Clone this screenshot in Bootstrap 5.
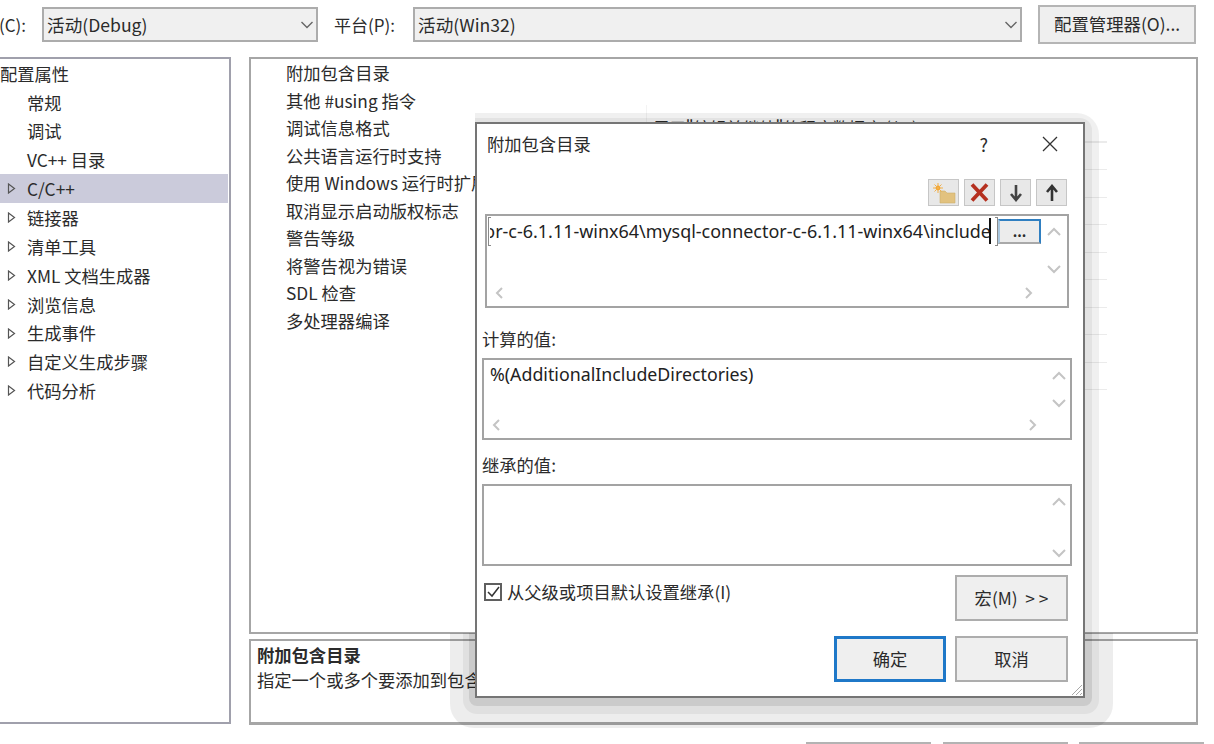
<!DOCTYPE html>
<html lang="zh">
<head>
<meta charset="utf-8">
<link href="https://cdn.jsdelivr.net/npm/bootstrap@5.3.0/dist/css/bootstrap.min.css" rel="stylesheet">
<style>
html,body{height:744px;overflow:hidden;background:#fff;}
body{font-family:"Noto Sans CJK SC","Noto Sans",sans-serif;font-size:17.3px;color:#2b2b2b;line-height:1;position:relative;}
.stage{width:1214px;height:744px;padding:7px 18px 0 0;}
.topbar{height:35px;margin-left:-1px;}
.lbl{font-size:17px;white-space:nowrap;}
.sel{height:35px;background:#f0f0f0;border:2px solid #acacac;display:flex;align-items:center;justify-content:space-between;padding:0 2px 0 3px;font-size:17.6px;flex:none;}
.sel-a{width:276px;margin-left:16px;margin-right:16px;}
.sel-b{width:609px;margin-left:18px;margin-right:16px;}
.mgr{width:158px;height:39px;margin-top:-1px;background:#efefef;border:2px solid #b5b5b5;font-size:17.4px;text-align:center;line-height:33px;flex:none;white-space:nowrap;}
.panes{margin-top:15px;height:667px;}
.tree{width:232px;margin-left:-1px;margin-right:18px;border:2px solid #a0a0ac;border-left:0;flex:none;}
.tree-row{height:28.85px;display:flex;align-items:center;padding-left:28px;position:relative;margin-right:1px;white-space:nowrap;}
.tree-row.root{padding-left:1px;}
.tree-row.on{background:#cbcbdb;}
.tree-row svg{position:absolute;left:8px;top:9px;}
.rcol{width:949px;flex:none;}
.grid-pane{height:577px;border:2px solid #a6a6a6;padding:0 0 0 35px;position:relative;overflow:hidden;}
.prop{height:27.5px;display:flex;align-items:center;white-space:nowrap;position:relative;}
.ghost{position:absolute;left:367px;top:0;line-height:27.5px;font-size:16.4px;}
.rules{position:absolute;left:833px;top:55.5px;width:23px;height:275px;background:repeating-linear-gradient(to bottom,transparent 0,transparent 26.5px,#ebebeb 26.5px,#ebebeb 27.5px);}
.vrule{position:absolute;left:395px;top:46px;width:1px;height:20px;background:#f3f3f3;}
.desc{height:86px;margin-top:5px;border:2px solid #a6a6a6;border-bottom-width:3px;padding:4px 6px;overflow:hidden;}
.desc b{display:block;font-weight:700;margin-bottom:5px;line-height:20px;}
.desc span{line-height:20px;white-space:nowrap;}
.foot{position:absolute;top:742px;width:125px;height:4px;border:2px solid #b3b3b3;background:#eee;}
.sh{position:absolute;}
.sh-a{left:475px;top:113px;width:624px;height:520px;background:rgba(0,0,0,.06);border-radius:0 22px 0 0;}
.sh-b{left:475px;top:118px;width:617px;height:515px;background:rgba(0,0,0,.05);border-radius:0 12px 0 0;}
.sh-c{left:450px;top:633px;width:663px;height:95px;background:rgba(0,0,0,.07);border-radius:0 0 24px 24px;}
.sh-d{left:463px;top:633px;width:636px;height:81px;background:rgba(0,0,0,.05);border-radius:0 0 14px 14px;}
.sh-e{left:469px;top:633px;width:623px;height:73px;background:rgba(0,0,0,.09);border-radius:0 0 8px 8px;}
.dlg{position:absolute;left:475px;top:122px;width:610px;height:576px;background:#fff;border:2px solid #757575;display:flex;flex-direction:column;padding:0 16px 0 5px;}
.dlg-head{height:40px;padding-left:5px;flex:none;}
.dlg-tools{height:27px;margin-top:15px;gap:5px;flex:none;}
.tbtn{width:31px;height:27px;background:#e8e8e8;border:1px solid #c6c6c6;display:flex;align-items:center;justify-content:center;}
.box{border:2px solid #a3a3a3;position:relative;margin-right:-5px;flex:none;}
.box1{height:94px;margin-top:8px;margin-left:3px;margin-right:-2px;}
.box2,.box3{height:82px;margin-top:8px;}
.caption{height:20px;flex:none;line-height:18px;}
.scr{position:absolute;}
.editline{position:absolute;left:3px;top:3px;height:26px;width:501px;overflow:hidden;font-family:"Noto Sans","Open Sans",sans-serif;font-size:17.95px;line-height:25px;white-space:nowrap;display:flex;justify-content:flex-end;color:#222;}
.caret{position:absolute;left:502px;top:2px;width:2px;height:26px;background:#111;}
.brk{position:absolute;top:1px;height:29px;width:3px;border:1px solid #8a8a8a;}
.brk-l{left:1px;border-right:0;}
.brk-r{left:508px;border-left:0;}
.browse{position:absolute;left:511px;top:3px;width:43px;height:25px;background:#ececec;border:2px solid #2f7fc1;border-bottom-color:#a9a9a9;border-left-color:#a9c7df;text-align:center;font-size:14px;line-height:20px;font-weight:700;}
.val{padding:4px 6px;font-family:"Noto Sans","Open Sans",sans-serif;font-size:17.8px;line-height:20px;color:#222;}
.btnx{width:113px;height:46px;background:#efefef;border:2px solid #adadad;display:flex;align-items:center;justify-content:center;color:#2b2b2b;white-space:nowrap;}
.btn-main{width:112px;border:3px solid #1f78c8;}
.chk{width:18px;height:18px;border:2px solid #5f5f5f;flex:none;display:flex;align-items:center;justify-content:center;}
.grip{position:absolute;right:0;bottom:0;}
</style>
</head>
<body>
<div class="stage">
  <div class="topbar d-flex align-items-center">
    <span class="lbl">(C):</span>
    <div class="sel sel-a"><span>活动(Debug)</span><svg width="14" height="8" viewBox="0 0 14 8"><path d="M1.500 1l5.500 5.500L12.500 1" fill="none" stroke="#666" stroke-width="1.400"/></svg></div>
    <span class="lbl">平台(P):</span>
    <div class="sel sel-b"><span>活动(Win32)</span><svg width="14" height="8" viewBox="0 0 14 8"><path d="M1.500 1l5.500 5.500L12.500 1" fill="none" stroke="#666" stroke-width="1.400"/></svg></div>
    <div class="mgr">配置管理器(O)...</div>
  </div>
  <div class="panes d-flex">
    <div class="tree">
      <div class="tree-row root">配置属性</div>
      <div class="tree-row">常规</div>
      <div class="tree-row">调试</div>
      <div class="tree-row">VC++ 目录</div>
      <div class="tree-row on"><svg width="9" height="11" viewBox="0 0 9 11"><path d="M1.500 1l6 4.500-6 4.500z" fill="none" stroke="#555" stroke-width="1.200"/></svg>C/C++</div>
      <div class="tree-row"><svg width="9" height="11" viewBox="0 0 9 11"><path d="M1.500 1l6 4.500-6 4.500z" fill="none" stroke="#555" stroke-width="1.200"/></svg>链接器</div>
      <div class="tree-row"><svg width="9" height="11" viewBox="0 0 9 11"><path d="M1.500 1l6 4.500-6 4.500z" fill="none" stroke="#555" stroke-width="1.200"/></svg>清单工具</div>
      <div class="tree-row"><svg width="9" height="11" viewBox="0 0 9 11"><path d="M1.500 1l6 4.500-6 4.500z" fill="none" stroke="#555" stroke-width="1.200"/></svg>XML 文档生成器</div>
      <div class="tree-row"><svg width="9" height="11" viewBox="0 0 9 11"><path d="M1.500 1l6 4.500-6 4.500z" fill="none" stroke="#555" stroke-width="1.200"/></svg>浏览信息</div>
      <div class="tree-row"><svg width="9" height="11" viewBox="0 0 9 11"><path d="M1.500 1l6 4.500-6 4.500z" fill="none" stroke="#555" stroke-width="1.200"/></svg>生成事件</div>
      <div class="tree-row"><svg width="9" height="11" viewBox="0 0 9 11"><path d="M1.500 1l6 4.500-6 4.500z" fill="none" stroke="#555" stroke-width="1.200"/></svg>自定义生成步骤</div>
      <div class="tree-row"><svg width="9" height="11" viewBox="0 0 9 11"><path d="M1.500 1l6 4.500-6 4.500z" fill="none" stroke="#555" stroke-width="1.200"/></svg>代码分析</div>
    </div>
    <div class="rcol">
      <div class="grid-pane">
        <div class="rules"></div>
        <div class="vrule"></div>
        <div class="prop">附加包含目录</div>
        <div class="prop">其他 #using 指令</div>
        <div class="prop">调试信息格式<span class="ghost">用于"编辑并继续"的程序数据库 (/ZI)</span></div>
        <div class="prop">公共语言运行时支持</div>
        <div class="prop">使用 Windows 运行时扩展</div>
        <div class="prop">取消显示启动版权标志</div>
        <div class="prop">警告等级</div>
        <div class="prop">将警告视为错误</div>
        <div class="prop">SDL 检查</div>
        <div class="prop">多处理器编译</div>
      </div>
      <div class="desc"><b>附加包含目录</b><span>指定一个或多个要添加到包含路径中的目录</span></div>
    </div>
  </div>
</div>
<div class="foot" style="left:806px"></div>
<div class="foot" style="left:943px"></div>
<div class="foot" style="left:1079px"></div>
<div class="sh sh-a"></div>
<div class="sh sh-b"></div>
<div class="sh sh-c"></div>
<div class="sh sh-d"></div>
<div class="sh sh-e"></div>
<div class="dlg">
  <div class="dlg-head d-flex align-items-center justify-content-between">
    <span>附加包含目录</span>
    <span class="d-flex align-items-center"><span style="font-size:18px;margin-right:54px">?</span><svg width="16" height="16" viewBox="0 0 16 16" style="margin-right:9px"><path d="M1 1l14 14M15 1L1 15" stroke="#333" stroke-width="1.300"/></svg></span>
  </div>
  <div class="dlg-tools d-flex justify-content-end">
    <div class="tbtn"><svg width="24" height="22" viewBox="0 0 24 22"><path d="M8 9h5l2 2h8v10H8z" fill="#e2c27f" stroke="#cfae6c" stroke-width=".6"/><circle cx="6" cy="6" r="2.400" fill="#f09a1e"/><path d="M6 1v10M1 6h10M2.500 2.500l7 7M9.500 2.500l-7 7" stroke="#f2b04a" stroke-width="1"/></svg></div>
    <div class="tbtn"><svg width="21" height="21" viewBox="0 0 21 21"><path d="M3 2.500l15 16M18 2.500L3 18.500" stroke="#b5301f" stroke-width="3.800"/></svg></div>
    <div class="tbtn"><svg width="14" height="18" viewBox="0 0 14 18"><path d="M7 1v14M2 10l5 6 5-6" fill="none" stroke="#444" stroke-width="2.600"/></svg></div>
    <div class="tbtn"><svg width="14" height="18" viewBox="0 0 14 18"><path d="M7 17V3M2 8l5-6 5 6" fill="none" stroke="#333" stroke-width="2.600"/></svg></div>
  </div>
  <div class="box box1">
    <div class="brk brk-l"></div>
    <div class="editline"><span>or-c-6.1.11-winx64\mysql-connector-c-6.1.11-winx64\include</span></div>
    <div class="caret"></div>
    <div class="brk brk-r"></div>
    <div class="browse">...</div>
    <svg class="scr" style="left:559px;top:8px" width="16" height="54" viewBox="0 0 16 54"><path d="M2 11l6-6 6 6M2 42l6 6 6-6" fill="none" stroke="#c4c4c4" stroke-width="2"/></svg>
    <svg class="scr" style="left:7px;top:70px" width="540" height="14" viewBox="0 0 540 14"><path d="M8 2L3 7l5 5M532 2l5 5-5 5" fill="none" stroke="#c4c4c4" stroke-width="2"/></svg>
  </div>
  <div class="caption" style="margin-top:22px">计算的值:</div>
  <div class="box box2">
    <div class="val">%(AdditionalIncludeDirectories)</div>
    <svg class="scr" style="left:567px;top:8px" width="16" height="46" viewBox="0 0 16 46"><path d="M2 11l6-6 6 6M2 32l6 6 6-6" fill="none" stroke="#c4c4c4" stroke-width="2"/></svg>
    <svg class="scr" style="left:7px;top:58px" width="548" height="14" viewBox="0 0 548 14"><path d="M8 2L3 7l5 5M539 2l5 5-5 5" fill="none" stroke="#c4c4c4" stroke-width="2"/></svg>
  </div>
  <div class="caption" style="margin-top:16px">继承的值:</div>
  <div class="box box3">
    <svg class="scr" style="left:567px;top:8px" width="16" height="64" viewBox="0 0 16 64"><path d="M2 11l6-6 6 6M2 56l6 6 6-6" fill="none" stroke="#c4c4c4" stroke-width="2"/></svg>
  </div>
  <div class="d-flex align-items-start justify-content-between" style="margin-top:9px;height:46px;flex:none">
    <div class="d-flex align-items-center" style="margin-top:8px;gap:5px;padding-left:2px"><span class="chk"><svg width="13" height="12" viewBox="0 0 13 12"><path d="M1 6l4 4 7-9" fill="none" stroke="#333" stroke-width="1.500"/></svg></span><span>从父级或项目默认设置继承(I)</span></div>
    <div class="btnx" style="margin-right:-1px">宏(M)&nbsp;&nbsp;&gt; &gt;</div>
  </div>
  <div class="d-flex justify-content-end" style="margin-top:15px;gap:9px;margin-right:-1px;flex:none">
    <div class="btnx btn-main">确定</div>
    <div class="btnx">取消</div>
  </div>
  <svg class="grip" width="14" height="14" viewBox="0 0 14 14"><path d="M13 3L3 13M13 7l-6 6M13 11l-2 2" stroke="#a8a8a8"/></svg>
</div>
<script src="https://cdn.jsdelivr.net/npm/bootstrap@5.3.0/dist/js/bootstrap.bundle.min.js"></script>
</body>
</html>
